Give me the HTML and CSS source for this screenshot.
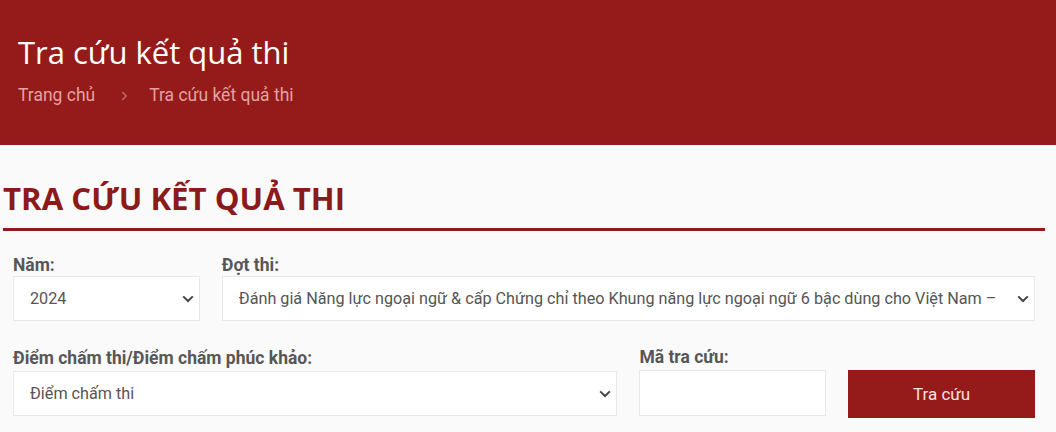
FILE: index.html
```html
<!DOCTYPE html>
<html lang="vi">
<head>
<meta charset="utf-8">
<title>Tra cứu kết quả thi</title>
<link rel="stylesheet" href="styles.css">
</head>
<body>
<header class="page-header">
  <h1 class="page-title">Tra cứu kết quả thi</h1>
  <nav class="breadcrumb">
    <a class="crumb" href="#">Trang chủ</a>
    <svg class="crumb-sep" width="7" height="10" viewBox="0 0 7 10"><path d="M1.2 1 L5.2 5 L1.2 9" fill="none" stroke="currentColor" stroke-width="1.6"/></svg>
    <span class="crumb current">Tra cứu kết quả thi</span>
  </nav>
</header>
<main class="content">
  <section class="lookup">
    <h2 class="lookup-title">TRA CỨU KẾT QUẢ THI</h2>
    <form class="lookup-form">
      <div class="row row-top">
        <div class="col col-20">
          <label class="field-label">Năm:</label>
          <div class="select-wrap">
            <select class="field-select"><option>2024</option></select>
            <svg class="chevron" width="12" height="8" viewBox="0 0 12 8"><path d="M1.2 1.4 L6 6 L10.8 1.4" fill="none" stroke="currentColor" stroke-width="2"/></svg>
          </div>
        </div>
        <div class="col col-80">
          <label class="field-label">Đợt thi:</label>
          <div class="select-wrap">
            <select class="field-select select-long"><option>Đánh giá Năng lực ngoại ngữ &amp; cấp Chứng chỉ theo Khung năng lực ngoại ngữ 6 bậc dùng cho Việt Nam – Tháng 12/2024</option></select>
            <svg class="chevron" width="12" height="8" viewBox="0 0 12 8"><path d="M1.2 1.4 L6 6 L10.8 1.4" fill="none" stroke="currentColor" stroke-width="2"/></svg>
          </div>
        </div>
      </div>
      <div class="row row-bottom">
        <div class="col col-60">
          <label class="field-label label-b">Điểm chấm thi/Điểm chấm phúc khảo:</label>
          <div class="select-wrap">
            <select class="field-select"><option>Điểm chấm thi</option></select>
            <svg class="chevron" width="12" height="8" viewBox="0 0 12 8"><path d="M1.2 1.4 L6 6 L10.8 1.4" fill="none" stroke="currentColor" stroke-width="2"/></svg>
          </div>
        </div>
        <div class="col col-20">
          <label class="field-label label-b">Mã tra cứu:</label>
          <input class="field-input" type="text">
        </div>
        <div class="col col-20 col-btn">
          <button class="btn-submit" type="button">Tra cứu</button>
        </div>
      </div>
    </form>
  </section>
</main>
</body>
</html>
```

FILE: styles.css
```css
* { box-sizing: border-box; }
html, body { margin: 0; padding: 0; }
body {
  background: #fafafa;
  font-family: Roboto, "Liberation Sans", sans-serif;
  color: #555;
  width: 1056px;
  height: 432px;
  overflow: hidden;
}
.page-header {
  background: #951a1a;
  height: 145px;
  padding: 32px 18px 0;
}
.page-title {
  margin: 0;
  font-family: "Open Sans", sans-serif;
  font-weight: 400;
  font-size: 31px;
  line-height: 40px;
  color: #fff;
}
.breadcrumb {
  margin-top: 11px;
  display: flex;
  align-items: center;
  font-size: 17.5px;
  line-height: 24px;
}
.crumb {
  color: #e3a2a2;
  text-decoration: none;
}
.crumb-sep {
  color: #c46565;
  margin: 1px 21px 0 26px;
}
.content {
  padding: 33px 11px 0 3px;
}
.lookup-title {
  margin: 0;
  font-family: "Open Sans", sans-serif;
  font-weight: 700;
  font-size: 31.2px;
  line-height: 40px;
  color: #8c1a1a;
  padding-bottom: 10px;
  border-bottom: 3px solid #8f1b1b;
}
.lookup-form {
  padding: 23px 10px 0;
}
.row {
  display: flex;
  margin: 0 -11px;
}
.row-bottom { margin-top: 25px; align-items: flex-end; }
.col { padding: 0 11px; }
.col-20 { width: 20%; }
.col-60 { width: 60%; }
.col-80 { width: 80%; }
.field-label {
  display: block;
  font-weight: 700;
  font-size: 17.5px;
  line-height: 22px;
  color: #575757;
}
.label-b { margin-bottom: 2px; }
.select-wrap { position: relative; }
.field-select {
  -webkit-appearance: none;
  appearance: none;
  display: block;
  width: 100%;
  height: 45px;
  margin: 0;
  padding: 0 33px 0 16px;
  border: 1px solid #e8e8e8;
  border-radius: 0;
  background: #fff;
  font-family: Roboto, sans-serif;
  font-size: 16.2px;
  color: #555;
  outline: none;
}
.select-long { padding-right: 38px; }
.chevron {
  position: absolute;
  right: 6px;
  top: 19px;
  color: #444;
  pointer-events: none;
}
.field-input {
  display: block;
  width: 100%;
  height: 46px;
  margin: 0;
  border: 1px solid #e8e8e8;
  border-radius: 0;
  background: #fff;
  outline: none;
}
.btn-submit {
  display: block;
  width: 100%;
  height: 48px;
  margin: 0 0 -2px;
  border: 0;
  border-radius: 0;
  background: #951a1a;
  color: #f6e2e2;
  font-family: Roboto, sans-serif;
  font-size: 17px;
}
```
